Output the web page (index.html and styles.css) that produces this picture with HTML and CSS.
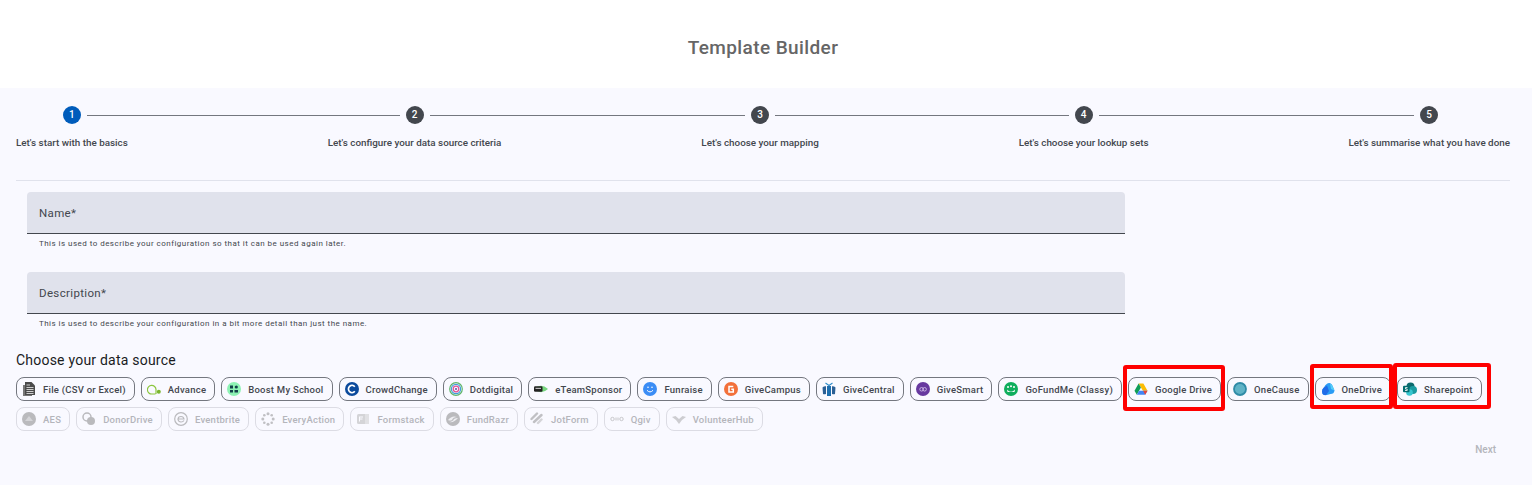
FILE: index.html
```html
<!DOCTYPE html>
<html lang="en">
<head>
    <meta charset="UTF-8">
    <meta name="viewport" content="width=device-width, initial-scale=1.0">
    <title>Template Builder</title>
    <link rel="stylesheet" href="styles.css">
</head>
<body>
    <header class="top-bar">
        <h1>Template Builder</h1>
    </header>

    <main class="builder">
        <!-- Stepper -->
        <div class="stepper">
            <div class="step">
                <div class="step-head">
                    <span class="step-line blank"></span>
                    <span class="step-num active">1</span>
                    <span class="step-line"></span>
                </div>
                <p>Let's start with the basics</p>
            </div>
            <span class="step-gap"></span>
            <div class="step">
                <div class="step-head">
                    <span class="step-line"></span>
                    <span class="step-num">2</span>
                    <span class="step-line"></span>
                </div>
                <p>Let's configure your data source criteria</p>
            </div>
            <span class="step-gap"></span>
            <div class="step">
                <div class="step-head">
                    <span class="step-line"></span>
                    <span class="step-num">3</span>
                    <span class="step-line"></span>
                </div>
                <p>Let's choose your mapping</p>
            </div>
            <span class="step-gap"></span>
            <div class="step">
                <div class="step-head">
                    <span class="step-line"></span>
                    <span class="step-num">4</span>
                    <span class="step-line"></span>
                </div>
                <p>Let's choose your lookup sets</p>
            </div>
            <span class="step-gap"></span>
            <div class="step">
                <div class="step-head">
                    <span class="step-line"></span>
                    <span class="step-num">5</span>
                    <span class="step-line blank"></span>
                </div>
                <p>Let's summarise what you have done</p>
            </div>
        </div>

        <hr>

        <!-- Form fields -->
        <div class="fields">
            <div class="field">
                <label class="field-box" for="name">Name*</label>
                <input type="hidden" id="name">
                <p class="hint">This is used to describe your configuration so that it can be used again later.</p>
            </div>
            <div class="field">
                <label class="field-box" for="description">Description*</label>
                <input type="hidden" id="description">
                <p class="hint">This is used to describe your configuration in a bit more detail than just the name.</p>
            </div>
        </div>

        <!-- Data sources -->
        <h2>Choose your data source</h2>
        <div class="chips">
            <button class="chip">
                <svg viewBox="0 0 14 14"><path d="M1 3h2v10h7v1H1z" fill="#777"/><path d="M3 0h6.500L13 3.500V13H3z" fill="#4a4a4a"/><path d="M4.500 5.500h7M4.500 7.500h7M4.500 9.500h7M4.500 11.500h7M4.500 3h3.500" stroke="#ddd" stroke-width=".9"/></svg>
                File (CSV or Excel)
            </button>
            <button class="chip">
                <svg viewBox="0 0 14 14"><path d="M8.500 12H5A4.300 4.300 0 1 1 9 7.500V12" fill="none" stroke="#8cc63f" stroke-width="1.200"/><circle cx="11.800" cy="9.800" r="2" fill="#7ab52e"/></svg>
                Advance
            </button>
            <button class="chip">
                <svg viewBox="0 0 14 14"><circle cx="7" cy="7" r="7" fill="#8df2b4"/><path d="M3 3.500h3v3H3zM3 8h3v2.500H3zM7.500 8h3.500v2.500H7.500z" fill="#12404a"/><circle cx="9.300" cy="5" r="1.600" fill="#12404a"/></svg>
                Boost My School
            </button>
            <button class="chip">
                <svg viewBox="0 0 14 14"><circle cx="7" cy="7" r="7" fill="#0b4a9c"/><path d="M9.800 4.700A3.600 3.600 0 1 0 9.800 9.300" fill="none" stroke="#fff" stroke-width="1.700"/><path d="M7 4v6" stroke="#0b4a9c" stroke-width=".7"/></svg>
                CrowdChange
            </button>
            <button class="chip">
                <svg viewBox="0 0 14 14"><circle cx="7" cy="7" r="6.300" fill="none" stroke="#5fb56a" stroke-width="1.200"/><circle cx="7" cy="7" r="4.600" fill="none" stroke="#3f9fd8" stroke-width="1.200"/><circle cx="7" cy="7" r="2.800" fill="none" stroke="#e0559a" stroke-width="1.300"/><circle cx="7" cy="7" r="1" fill="#5a4fa0"/></svg>
                Dotdigital
            </button>
            <button class="chip">
                <svg viewBox="0 0 14 14"><path d="M0 7Q7 .5 14 7 7 13.500 0 7z" fill="#76d67e"/><rect x="0" y="4.300" width="8.500" height="5.400" rx="1.200" fill="#222"/><rect x="1.500" y="5.800" width="5.500" height="1.200" fill="#bbb"/></svg>
                eTeamSponsor
            </button>
            <button class="chip">
                <svg viewBox="0 0 14 14"><circle cx="7" cy="7" r="7" fill="#3b8df5"/><circle cx="5" cy="5.200" r=".8" fill="#fff"/><circle cx="9" cy="5.200" r=".8" fill="#fff"/><path d="M4 8.300Q7 11.500 10 8.300" fill="none" stroke="#fff" stroke-width="1"/></svg>
                Funraise
            </button>
            <button class="chip">
                <svg viewBox="0 0 14 14"><circle cx="7" cy="7" r="7" fill="#f2703a"/><path d="M9.300 4.600H5v5.300h4.300V7.300H7.300" fill="none" stroke="#fff" stroke-width="1.500"/></svg>
                GiveCampus
            </button>
            <button class="chip">
                <svg viewBox="0 0 14 14"><path d="M5 4h4v10H5z" fill="#1d6fb0"/><path d="M0.500 5.500Q2 4 4 4.300V12Q2 12.500 1 12z" fill="#2a5f95"/><path d="M13.500 5.500Q12 4 10 4.300V12Q12 12.500 13 12z" fill="#2a5f95"/><path d="M3.500 1l3.500 2.500L10.500 1" fill="none" stroke="#2d8cc9" stroke-width="1.100"/></svg>
                GiveCentral
            </button>
            <button class="chip">
                <svg viewBox="0 0 14 14"><circle cx="7" cy="7" r="7" fill="#67399f"/><circle cx="5.600" cy="7.300" r="1.800" fill="none" stroke="#d8c8ee" stroke-width=".8"/><circle cx="8.600" cy="7.300" r="1.800" fill="none" stroke="#d8c8ee" stroke-width=".8"/></svg>
                GiveSmart
            </button>
            <button class="chip">
                <svg viewBox="0 0 14 14"><circle cx="7" cy="7" r="7" fill="#0fae5d"/><path d="M3 7.500Q7 12 11 7.500L10.500 10H3.500z" fill="#fff"/><circle cx="4" cy="5" r="1" fill="#fff"/><circle cx="7" cy="4.200" r="1" fill="#fff"/><circle cx="10" cy="5" r="1" fill="#fff"/></svg>
                GoFundMe (Classy)
            </button>
            <button class="chip mark-drive">
                <svg viewBox="0 0 14 14"><path d="M4.600 1.500h4.800l4.100 7.300H8.900z" fill="#fbbc04"/><path d="M4.600 1.500L.5 8.800l2.300 3.900 4.100-7.200z" fill="#0f9d58"/><path d="M2.800 12.700h8.400l2.300-3.900H5z" fill="#4285f4"/><path d="M11.200 12.700l2.300-3.900H9.200z" fill="#ea4335"/></svg>
                Google Drive
            </button>
            <button class="chip">
                <svg viewBox="0 0 14 14"><circle cx="7" cy="7" r="6" fill="#5fb3c6" stroke="#2f8ba6" stroke-width="1.800"/></svg>
                OneCause
            </button>
            <button class="chip mark-onedrive">
                <svg viewBox="0 0 14 14"><path d="M1 9.500Q1 7 3 5.500 5 1 8.500 1 11 1.500 12 5L13.500 8.500Q13 12 9.500 12 6 13.500 3 13 1 12 1 9.500z" fill="#2a9cf5"/><path d="M1 9.500Q1 7 3 5.500L6 3.500 8 9 5 13H3Q1 12 1 9.500z" fill="#1f6ae8"/><path d="M9 1.500Q11 2 12 5L13.500 8.500 10 7z" fill="#55cdf8"/></svg>
                OneDrive
            </button>
            <button class="chip mark-sharepoint">
                <svg viewBox="0 0 14 14"><circle cx="7.500" cy="4.500" r="4" fill="#0b6a6e"/><circle cx="10" cy="8" r="4" fill="#1a9ba1"/><circle cx="6.500" cy="10.500" r="3.300" fill="#37c6d0"/><rect x="0" y="3.800" width="6.500" height="6.500" rx="1" fill="#036c70"/><path d="M4.500 5.500H2.500v1.500h1.700v1.500H2" fill="none" stroke="#fff" stroke-width=".8"/></svg>
                Sharepoint
            </button>

            <button class="chip off" disabled>
                <svg viewBox="0 0 14 14"><circle cx="7" cy="7" r="7" fill="#555"/><path d="M3 9l4-5 4 5z" fill="#999"/></svg>
                AES
            </button>
            <button class="chip off" disabled>
                <svg viewBox="0 0 14 14"><circle cx="5" cy="5" r="4" fill="none" stroke="#555" stroke-width="1.500"/><circle cx="9" cy="9" r="4" fill="#555"/></svg>
                DonorDrive
            </button>
            <button class="chip off" disabled>
                <svg viewBox="0 0 14 14"><circle cx="7" cy="7" r="6.300" fill="none" stroke="#555" stroke-width="1.200"/><path d="M4 7h6Q9.500 4.500 7 4.500 4 4.500 4 7.500 4.500 10 7 10 9 10 10 8.500" fill="none" stroke="#555" stroke-width="1.200"/></svg>
                Eventbrite
            </button>
            <button class="chip off" disabled>
                <svg viewBox="0 0 14 14"><g fill="#666"><circle cx="7" cy="1.800" r="1.500"/><circle cx="7" cy="12.200" r="1.500"/><circle cx="1.800" cy="7" r="1.500"/><circle cx="12.200" cy="7" r="1.500"/><circle cx="3.300" cy="3.300" r="1.300"/><circle cx="10.700" cy="3.300" r="1.300"/><circle cx="3.300" cy="10.700" r="1.300"/><circle cx="10.700" cy="10.700" r="1.300"/></g></svg>
                EveryAction
            </button>
            <button class="chip off" disabled>
                <svg viewBox="0 0 14 14"><rect x="1" y="2" width="12" height="10" rx="1.500" fill="#999"/><path d="M3 4.500h4v1H4v1h2.500v1H4v2H3z" fill="#fff"/><rect x="9" y="2" width="4" height="10" fill="#bbb"/></svg>
                Formstack
            </button>
            <button class="chip off" disabled>
                <svg viewBox="0 0 14 14"><circle cx="7" cy="7" r="7" fill="#555"/><path d="M2 8Q6 3 11 5 7 5 6 8 4 9 2 8zM12 6Q8 11 3 10 7 9.500 8 7 10 6 12 6z" fill="#ddd"/></svg>
                FundRazr
            </button>
            <button class="chip off" disabled>
                <svg viewBox="0 0 14 14"><g stroke="#666" stroke-width="2.400" stroke-linecap="round"><path d="M1.500 7L7 1.500"/><path d="M4 10L11.500 3"/></g><path d="M8 11l3.500-3.500" stroke="#999" stroke-width="2.400" stroke-linecap="round"/></svg>
                JotForm
            </button>
            <button class="chip off" disabled>
                <svg viewBox="0 0 14 14"><g fill="none" stroke="#777" stroke-width="1"><circle cx="2.500" cy="7" r="1.700"/><path d="M6 5.500v3M8 5.500v3"/><circle cx="11.500" cy="7" r="1.700"/></g></svg>
                Qgiv
            </button>
            <button class="chip off" disabled>
                <svg viewBox="0 0 14 14"><path d="M0 5l3.500-1 3.500 3 3.500-3L14 5l-4 3-3 4-3-4z" fill="#888"/></svg>
                VolunteerHub
            </button>
        </div>

        <div class="actions">
            <button class="next" disabled>Next</button>
        </div>
    </main>
</body>
</html>
```

FILE: styles.css
```css
* {
    box-sizing: border-box;
}
html, body {
    height: 100%;
}
body {
    margin: 0;
    font-family: Roboto, "Liberation Sans", sans-serif;
    background-color: #f9f9ff;
    color: #43474e;
}
.top-bar {
    height: 88px;
    padding: 6px 6px 0 0;
    background-color: #fff;
    display: flex;
    align-items: center;
    justify-content: center;
}
.top-bar h1 {
    margin: 0;
    font-size: 19px;
    font-weight: 500;
    letter-spacing: 0.4px;
    color: #666;
}
.builder {
    padding: 18px 22px 0 16px;
}

/* stepper */
.stepper {
    display: flex;
}
.step {
    flex: none;
}
.step p {
    margin: 12px 0 0;
    font-size: 9.850px;
    font-weight: 500;
    line-height: 14px;
    white-space: nowrap;
    color: #43474e;
}
.step-head {
    display: flex;
    align-items: center;
    height: 18px;
}
.step-num {
    flex: none;
    width: 18px;
    height: 18px;
    border-radius: 50%;
    background-color: #43474e;
    color: #fff;
    font-size: 10px;
    font-weight: 500;
    line-height: 18px;
    text-align: center;
}
.step-num.active {
    background-color: #005cbb;
}
.step-line {
    flex: 1;
    height: 1px;
    background-color: #74777f;
}
.step-head .step-line:first-child {
    margin-right: 6px;
}
.step-head .step-line:last-child {
    margin-left: 6px;
}
.step-line.blank {
    background: none;
}
.step-gap {
    flex: 1;
    height: 1px;
    margin-top: 9px;
    background-color: #74777f;
}
hr {
    height: 1px;
    margin: 30px 0 11px;
    border: 0;
    background-color: #e0e2ec;
}

/* fields */
.fields {
    width: 1098px;
    margin-left: 11px;
}
.field {
    height: 80px;
}
.field:last-child {
    height: 69px;
}
.field-box {
    display: block;
    height: 42px;
    padding: 14px 12px 0;
    border-bottom: 1px solid #43474e;
    border-radius: 4px 4px 0 0;
    background-color: #e0e2ec;
    font-size: 11.500px;
    line-height: 14px;
    letter-spacing: 0.35px;
    color: #43474e;
}
.hint {
    margin: 4px 0 0;
    padding-left: 12px;
    font-size: 8px;
    line-height: 11px;
    letter-spacing: 0.47px;
    color: #43474e;
}

/* data sources */
h2 {
    margin: 9px 0 0;
    font-size: 14px;
    font-weight: 400;
    line-height: 20px;
    letter-spacing: 0.22px;
    color: #1a1c1e;
}
.chips {
    display: flex;
    flex-wrap: wrap;
    gap: 6px;
    margin-top: 7px;
}
.chip {
    position: relative;
    display: flex;
    align-items: center;
    gap: 7px;
    height: 24px;
    padding: 0 8px 0 5px;
    border: 1px solid #74777f;
    border-radius: 8px;
    background: none;
    font-family: inherit;
    font-size: 9.500px;
    font-weight: 500;
    letter-spacing: 0.24px;
    color: #43474e;
    white-space: nowrap;
}
.chip svg {
    flex: none;
    width: 14px;
    height: 14px;
}
.chip.off {
    border-color: #dcdce4;
    color: #b4b5bb;
}
.chip.off svg {
    opacity: 0.38;
}

/* red annotation boxes */
.mark-drive::after,
.mark-onedrive::after,
.mark-sharepoint::after {
    content: "";
    position: absolute;
    border: 4px solid #f00;
    border-radius: 3px;
}
.mark-drive::after {
    inset: -13px -5px -11px -6px;
}
.mark-onedrive::after {
    inset: -14px -3px -9px -6px;
}
.mark-sharepoint::after {
    inset: -15px -10px -9px -5px;
}

.actions {
    display: flex;
    justify-content: flex-end;
    margin-top: 12px;
    padding-right: 14px;
}
.next {
    padding: 0;
    border: 0;
    background: none;
    font-family: inherit;
    font-size: 10px;
    font-weight: 500;
    line-height: 14px;
    letter-spacing: 0;
    color: #b4b5bb;
}
```
